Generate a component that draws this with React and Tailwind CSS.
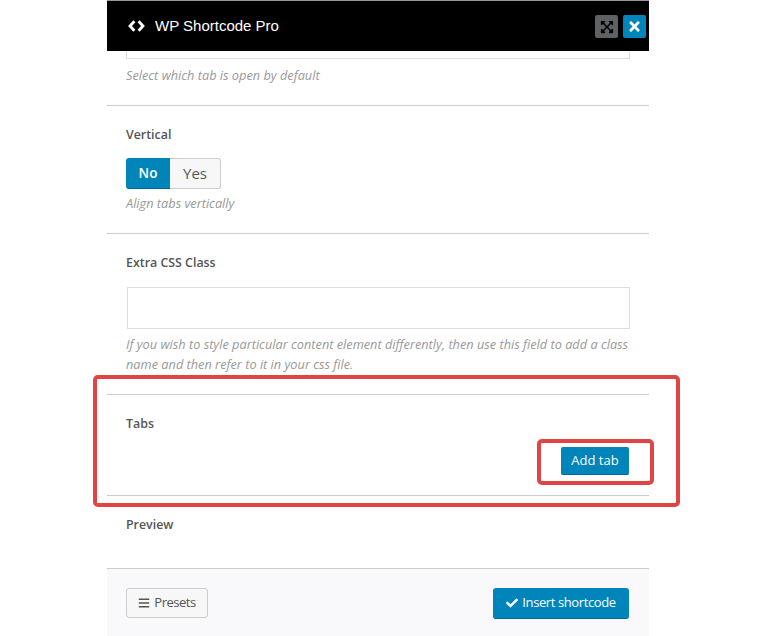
import React from 'react';
import { FaExpandArrowsAlt, FaTimes, FaBars, FaCheck } from 'react-icons/fa';

const helpText = "text-[12.75px] leading-[20px] italic text-[#999]";
const label = "text-[12.4px] leading-[20px] font-semibold text-[#555]";

function Section({ children, className = '' }) {
  return <div className={`border-b border-[#ccc] px-[19px] ${className}`}>{children}</div>;
}

export default function App() {
  return (
    <div className="relative w-[771px] h-[636px] bg-white overflow-hidden font-['Open_Sans',sans-serif]">
      <div className="ml-[107px] w-[542px] h-[636px] flex flex-col">
        {/* Header */}
        <div className="h-[51px] shrink-0 bg-black border-t border-[#999] flex items-center pl-[21px] pr-[3px]">
          <svg width="17" height="12" viewBox="0 0 17 12" fill="none" stroke="white" strokeWidth="2.8">
            <path d="M6.4 1.2 2 6l4.4 4.8" />
            <path d="M10.6 1.2 15 6l-4.4 4.8" />
          </svg>
          <span className="ml-[10px] font-['Liberation_Sans',sans-serif] text-[15px] text-white">WP Shortcode Pro</span>
          <div className="ml-auto flex gap-[5px] mt-[1px]">
            <button className="w-[23px] h-[23px] rounded-[2px] bg-[#5f6163] flex items-center justify-center text-black">
              <FaExpandArrowsAlt size={14} />
            </button>
            <button className="w-[23px] h-[23px] rounded-[2px] bg-[#0085ba] flex items-center justify-center text-white">
              <FaTimes size={15} />
            </button>
          </div>
        </div>

        {/* Tab select (scrolled under header) */}
        <Section className="h-[55px]">
          <div className="h-[8px] border border-t-0 border-[#ddd]" />
          <p className={`${helpText} mt-[6px]`}>Select which tab is open by default</p>
        </Section>

        {/* Vertical */}
        <Section className="h-[128px] pt-[19px]">
          <div className={label}>Vertical</div>
          <div className="mt-[13px] flex w-[95px] h-[31px]">
            <button className="w-[44px] rounded-l-[3px] bg-[#0085ba] border-b border-[#006799] text-white text-[13.5px] font-semibold">No</button>
            <button className="w-[51px] rounded-r-[3px] bg-[#f7f7f7] border border-l-0 border-[#ccc] text-[#555] text-[15px]">Yes</button>
          </div>
          <p className={`${helpText} mt-[4px]`}>Align tabs vertically</p>
        </Section>

        {/* Extra CSS Class */}
        <Section className="h-[161px] pt-[19px]">
          <div className={label}>Extra CSS Class</div>
          <div className="mt-[14px] ml-[1px] w-[503px] h-[42px] border border-[#ddd]" />
          <p className={`${helpText} mt-[5px]`}>
            If you wish to style particular content element differently, then use this field to add a class name and then refer to it in your css file.
          </p>
        </Section>

        {/* Tabs */}
        <Section className="h-[101px] pt-[19px]">
          <div className={label}>Tabs</div>
          <div className="flex justify-end mt-[13px] pr-[1px]">
            <button className="h-[28px] w-[68px] pt-[1px] rounded-[2px] bg-[#0085ba] border-b border-[#006799] text-white text-[13px]">Add tab</button>
          </div>
        </Section>

        {/* Preview */}
        <Section className="h-[73px] pt-[19px]">
          <div className={label}>Preview</div>
        </Section>

        {/* Footer */}
        <div className="flex-1 bg-[#f9f8fa] px-[19px] pt-[19px] flex justify-between items-start">
          <button className="h-[30px] w-[82px] rounded-[3px] bg-[#f7f7f7] border border-[#ccc] text-[#555] text-[13px] tracking-[-0.5px] flex items-center justify-center gap-[4px]">
            <FaBars size={12} /> Presets
          </button>
          <button className="h-[31px] w-[136px] mr-[1px] rounded-[3px] bg-[#0085ba] border-b border-[#006799] text-white text-[13px] tracking-[-0.4px] flex items-center justify-center gap-[4px]">
            <FaCheck size={12} /> Insert shortcode
          </button>
        </div>
      </div>

      {/* Red annotation boxes */}
      <div className="absolute left-[93px] top-[375px] w-[587px] h-[132px] border-[4px] border-[#e04444] rounded-[5px]" />
      <div className="absolute left-[537px] top-[439px] w-[117px] h-[46px] border-[4px] border-[#e04444] rounded-[5px]" />
    </div>
  );
}
